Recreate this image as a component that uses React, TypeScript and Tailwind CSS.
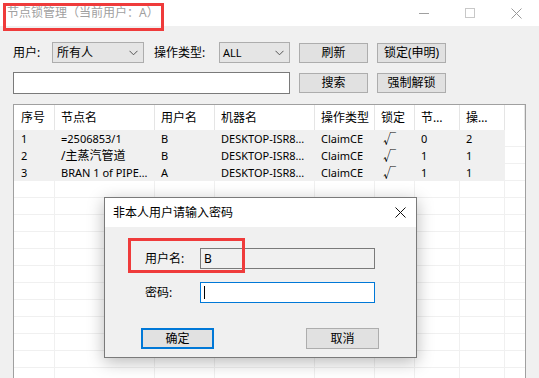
import React from "react";

const cols = [41, 100, 60, 100, 60, 40, 45, 45];
const headers = ["序号", "节点名", "用户名", "机器名", "操作类型", "锁定", "节…", "操…"];
const rows = [
  ["1", "=2506853/1", "B", "DESKTOP-ISR8…", "ClaimCE", "√", "0", "2"],
  ["2", "/主蒸汽管道", "B", "DESKTOP-ISR8…", "ClaimCE", "√", "1", "1"],
  ["3", "BRAN 1 of PIPE…", "A", "DESKTOP-ISR8…", "ClaimCE", "√", "1", "1"],
];

function Chevron() {
  return (
    <svg width="9" height="6" viewBox="0 0 9 6" className="shrink-0">
      <path d="M0.5 0.8 L4.5 4.8 L8.5 0.8" fill="none" stroke="#555" strokeWidth="1" />
    </svg>
  );
}

function Btn({ children, w = "w-[69px]" }: { children: React.ReactNode; w?: string }) {
  return (
    <div className={`${w} h-[20px] bg-[#e1e1e1] border border-[#adadad] flex items-center justify-center text-black`}>
      {children}
    </div>
  );
}

export default function App() {
  const font = { fontFamily: '"Noto Sans", "Noto Sans CJK SC", sans-serif' };
  const latin = { fontFamily: '"Noto Sans", "Noto Sans CJK SC", sans-serif' };
  return (
    <div className="w-[539px] h-[378px] bg-[#f0f0f0] relative overflow-hidden text-[12px] leading-none text-black" style={font}>
      {/* title bar */}
      <div className="h-[26px] bg-white flex items-center">
        <div className="pl-[7px] text-[#a0a0a0] text-[12px]">节点锁管理（当前用户：A）</div>
        <div className="ml-auto flex items-center h-full">
          <div className="w-[46px] flex justify-center">
            <div className="w-[10px] h-px bg-[#a0a0a0]" />
          </div>
          <div className="w-[46px] flex justify-center">
            <div className="w-[10px] h-[10px] border border-[#c8c8c8]" />
          </div>
          <div className="w-[46px] flex justify-center">
            <svg width="11" height="11" viewBox="0 0 11 11">
              <path d="M0.5 0.5 L10.5 10.5 M10.5 0.5 L0.5 10.5" stroke="#999" strokeWidth="1" />
            </svg>
          </div>
        </div>
      </div>
      <div className="absolute left-[3px] top-[3px] w-[161px] h-[28px] border-[3px] border-[#ef3b3b]" />

      {/* row 1 */}
      <div className="flex items-center pl-[13px] mt-[16px]">
        <div className="w-[39px]">用户:</div>
        <div className="w-[92px] h-[21px] bg-[#e5e5e5] border border-[#adadad] flex items-center pl-[4px] pr-[5px]">
          <span>所有人</span>
          <span className="ml-auto"><Chevron /></span>
        </div>
        <div className="ml-[10px] w-[65px]">操作类型:</div>
        <div className="w-[71px] h-[21px] bg-[#e5e5e5] border border-[#adadad] flex items-center pl-[3px] pr-[5px]">
          <span className="text-[11px]" style={latin}>ALL</span>
          <span className="ml-auto"><Chevron /></span>
        </div>
        <div className="ml-[9px]"><Btn>刷新</Btn></div>
        <div className="ml-[9px]"><Btn>锁定(申明)</Btn></div>
      </div>

      {/* row 2 */}
      <div className="flex items-center pl-[13px] mt-[9px]">
        <div className="w-[277px] h-[22px] bg-white border border-[#7a7a7a]" />
        <div className="ml-[9px]"><Btn>搜索</Btn></div>
        <div className="ml-[9px]"><Btn>强制解锁</Btn></div>
      </div>

      {/* table */}
      <div className="ml-[13px] mt-[10px] w-[513px] h-[300px] bg-white border border-[#a0a0a0] overflow-hidden">
        <div className="flex h-[25px]">
          {headers.map((h, i) => (
            <div
              key={i}
              className={`h-full flex items-center border-r border-[#e5e5e5] ${i === 0 ? "pl-[7px]" : "pl-[6px]"}`}
              style={{ width: cols[i] }}
            >
              {h}
            </div>
          ))}
          <div className="flex-1 h-full border-r border-[#e5e5e5]" />
        </div>
        {rows.map((r, ri) => (
          <div key={ri} className="flex h-[17px] text-[11px]" style={latin}>
            {r.map((c, i) => (
              <div
                key={i}
                className={`h-full flex items-center bg-[#f0f0f0] whitespace-nowrap ${i === 0 ? "pl-[7px]" : i === 5 ? "pl-[8px] text-[13px]" : "pl-[6px]"} ${ri === 1 && i === 1 ? "text-[12px]" : ""}`}
                style={{ width: cols[i] }}
              >
                {c}
              </div>
            ))}
            <div className="flex-1 h-full border-b border-[#f0f0f0]" />
          </div>
        ))}
        {Array.from({ length: 12 }).map((_, ri) => (
          <div key={ri} className="flex h-[17px]">
            {cols.map((w, i) => (
              <div key={i} className="h-full border-r border-b border-[#f0f0f0]" style={{ width: w }} />
            ))}
            <div className="flex-1 h-full border-b border-[#f0f0f0]" />
          </div>
        ))}
      </div>

      {/* dialog */}
      <div className="absolute left-[104px] top-[197px] w-[313px] h-[161px] border border-[#7a7a7a] bg-[#f0f0f0] shadow-[0_4px_16px_rgba(0,0,0,0.28)] flex flex-col">
        <div className="h-[29px] bg-white flex items-center pl-[8px] shrink-0">
          <span className="text-[12px]">非本人用户请输入密码</span>
          <svg width="11" height="11" viewBox="0 0 11 11" className="ml-auto mr-[10px]">
            <path d="M0.5 0.5 L10.5 10.5 M10.5 0.5 L0.5 10.5" stroke="#111" strokeWidth="1" />
          </svg>
        </div>
        <div className="flex items-center mt-[21px] pl-[40px]">
          <div className="w-[55px]">用户名:</div>
          <div className="w-[175px] h-[21px] bg-[#f0f0f0] border border-[#7a7a7a] flex items-center pl-[3px]">B</div>
        </div>
        <div className="flex items-center mt-[13px] pl-[40px]">
          <div className="w-[55px]">密码:</div>
          <div className="w-[175px] h-[21px] bg-white border border-[#0078d7] flex items-center pl-[3px]">
            <div className="w-px h-[13px] bg-black" />
          </div>
        </div>
        <div className="flex items-center mt-[25px] pl-[36px]">
          <div className="w-[73px] h-[21px] bg-[#e1e1e1] border-2 border-[#0078d7] flex items-center justify-center">确定</div>
          <div className="ml-[92px] w-[73px] h-[21px] bg-[#e1e1e1] border border-[#adadad] flex items-center justify-center">取消</div>
        </div>
      </div>
      <div className="absolute left-[128px] top-[238px] w-[117px] h-[35px] border-[3px] border-[#ef3b3b]" />
    </div>
  );
}
